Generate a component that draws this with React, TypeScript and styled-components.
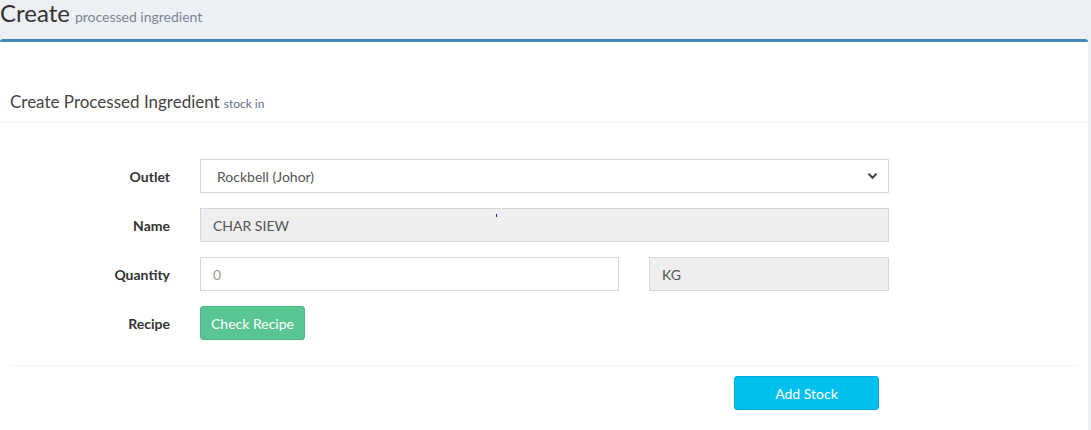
import styled, { createGlobalStyle } from 'styled-components'

const GlobalStyle = createGlobalStyle`
  * { box-sizing: border-box; }
  body {
    margin: 0;
    background: #ecf0f5;
    font-family: Lato, "Open Sans", sans-serif;
    color: #333;
    font-size: 14px;
  }
`

const Page = styled.div`
  width: 1091px;
  min-height: 430px;
  overflow: hidden;
`

const ContentHeader = styled.div`
  height: 39px;
  display: flex;
  align-items: baseline;
  gap: 5px;
`

const Heading = styled.h1`
  margin: 0;
  font-size: 24px;
  font-weight: 400;
  line-height: 26px;
  color: #333;
`

const SubHeading = styled.small`
  font-size: 14px;
  color: #7c8593;
`

const Box = styled.div`
  width: 1088px;
  background: #fff;
  border-top: 3px solid #3c8dbc;
  border-radius: 3px 3px 0 0;
  min-height: 400px;
`

const BoxHeader = styled.div`
  padding: 50px 10px 10px;
  border-bottom: 1px solid #f4f4f4;
  display: flex;
  align-items: baseline;
  gap: 4px;
`

const BoxTitle = styled.h3`
  margin: 0;
  font-size: 17px;
  font-weight: 400;
  line-height: 20px;
  color: #444;
`

const BoxTag = styled.small`
  font-size: 12px;
  color: #5d6f86;
`

const BoxBody = styled.div`
  padding: 36px 10px 25px;
  display: grid;
  grid-template-columns: 160px 689px;
  column-gap: 30px;
  row-gap: 15px;
  align-items: center;
`

const Label = styled.label`
  text-align: right;
  font-weight: 700;
  font-size: 14px;
  color: #333;
`

const Field = styled.div`
  position: relative;
  display: flex;
  gap: 30px;
`

const Control = styled.div<{ disabled?: boolean; width?: number; placeholder?: boolean }>`
  height: 34px;
  width: ${p => (p.width ? `${p.width}px` : '100%')};
  border: 1px solid #d2d6de;
  background: ${p => (p.disabled ? '#eee' : '#fff')};
  color: ${p => (p.placeholder ? '#999' : '#555')};
  padding: 0 12px;
  display: flex;
  align-items: center;
  font-size: 14px;
`

const Select = styled(Control)`
  padding: 0 10px 0 16px;
  justify-content: space-between;
`

const Caret = styled.span`
  position: absolute;
  left: 296px;
  top: 6px;
  width: 1px;
  height: 3px;
  background: #1a1aff;
`

const Button = styled.button<{ tone: 'success' | 'info'; width?: number }>`
  height: 34px;
  width: ${p => (p.width ? `${p.width}px` : 'auto')};
  padding: 0 10px;
  border-radius: 3px;
  border: 1px solid ${p => (p.tone === 'success' ? '#4fb986' : '#00acd6')};
  background: ${p => (p.tone === 'success' ? '#59c592' : '#00c0ef')};
  color: #fff;
  font-family: inherit;
  font-size: 14px;
  cursor: pointer;
`

const ButtonRow = styled.div`
  width: fit-content;
`

const BoxFooter = styled.div`
  margin: 0 10px;
  border-top: 1px solid #f4f4f4;
  padding: 10px 0 0 724px;
`

const Chevron = () => (
  <svg width="11" height="8" viewBox="0 0 11 8" aria-hidden>
    <path d="M1.5 1.8 5.5 5.8 9.5 1.8" fill="none" stroke="#444" strokeWidth="2" />
  </svg>
)

export default function App() {
  return (
    <Page>
      <GlobalStyle />
      <ContentHeader>
        <Heading>Create</Heading>
        <SubHeading>processed ingredient</SubHeading>
      </ContentHeader>
      <Box>
        <BoxHeader>
          <BoxTitle>Create Processed Ingredient</BoxTitle>
          <BoxTag>stock in</BoxTag>
        </BoxHeader>
        <BoxBody>
          <Label>Outlet</Label>
          <Field>
            <Select>
              <span>Rockbell (Johor)</span>
              <Chevron />
            </Select>
          </Field>

          <Label>Name</Label>
          <Field>
            <Control disabled>CHAR SIEW</Control>
            <Caret />
          </Field>

          <Label>Quantity</Label>
          <Field>
            <Control width={419} placeholder>0</Control>
            <Control width={240} disabled>KG</Control>
          </Field>

          <Label>Recipe</Label>
          <ButtonRow>
            <Button tone="success">Check Recipe</Button>
          </ButtonRow>
        </BoxBody>
        <BoxFooter>
          <Button tone="info" width={145}>Add Stock</Button>
        </BoxFooter>
      </Box>
    </Page>
  )
}
